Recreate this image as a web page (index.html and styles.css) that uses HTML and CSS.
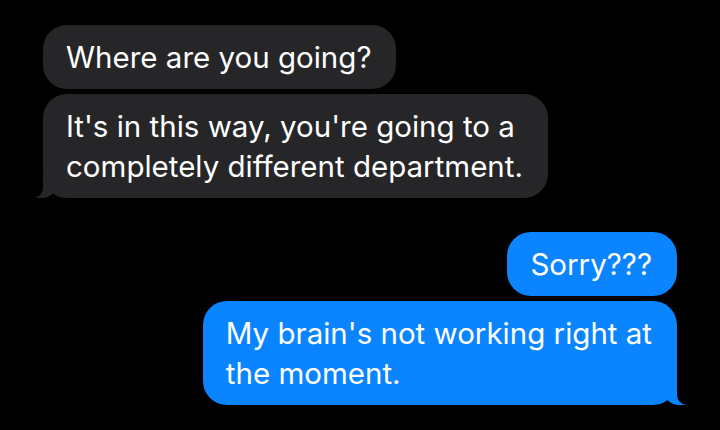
FILE: index.html
```html
<!DOCTYPE html>
<html lang="en">
<head>
<meta charset="utf-8">
<title>Messages</title>
<link rel="stylesheet" href="styles.css">
</head>
<body>
<main class="chat">
  <section class="group received">
    <p class="bubble">Where are you going?</p>
    <p class="bubble tail">It's in this way, you're going to a<br>completely different department.</p>
  </section>
  <section class="group sent">
    <p class="bubble">Sorry???</p>
    <p class="bubble tail">My brain's not working right at<br>the moment.</p>
  </section>
</main>
</body>
</html>
```

FILE: styles.css
```css
html, body {
  margin: 0;
  background: #000;
}

.chat {
  width: 720px;
  height: 430px;
  box-sizing: border-box;
  padding: 25px 43px;
  display: flex;
  flex-direction: column;
  gap: 34px;
  font-family: Inter, "Liberation Sans", Arial, sans-serif;
  font-size: 29.5px;
  line-height: 40px;
  color: #fff;
  overflow: hidden;
}

.group {
  display: flex;
  flex-direction: column;
  gap: 5px;
}

.received {
  align-items: flex-start;
}

.sent {
  align-items: flex-end;
}

.bubble {
  position: relative;
  margin: 0;
  width: fit-content;
  max-width: 520px;
  box-sizing: border-box;
  padding: 12px 25px 12px 23px;
  border-radius: 24px;
  white-space: nowrap;
}

.received .bubble {
  background: #262628;
}

.sent .bubble {
  background: #0a84ff;
}

/* tails */
.bubble.tail::before,
.bubble.tail::after {
  content: "";
  position: absolute;
  bottom: 0;
  height: 22px;
}

.received .bubble.tail::before {
  left: -7px;
  width: 22px;
  background: #262628;
  border-bottom-right-radius: 16px;
}

.received .bubble.tail::after {
  left: -12px;
  width: 12px;
  background: #000;
  border-bottom-right-radius: 10px;
}

.sent .bubble.tail::before {
  right: -8px;
  width: 22px;
  background: #0a84ff;
  border-bottom-left-radius: 16px;
}

.sent .bubble.tail::after {
  right: -13px;
  width: 13px;
  background: #000;
  border-bottom-left-radius: 10px;
}
```
